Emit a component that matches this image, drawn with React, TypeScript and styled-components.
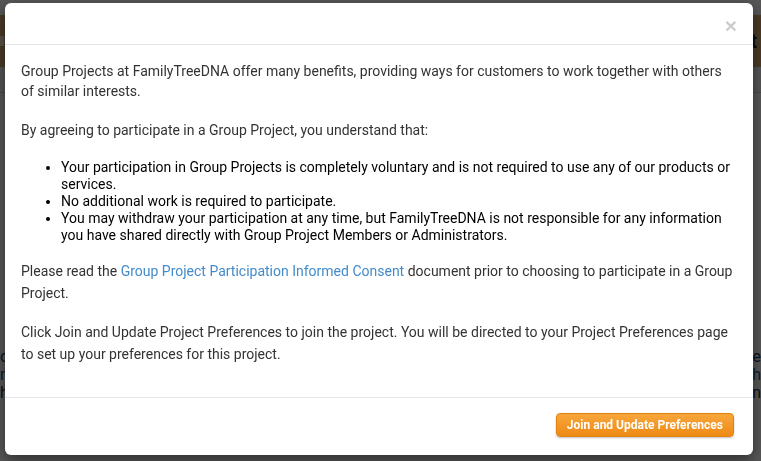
import React from "react";
import styled, { createGlobalStyle } from "styled-components";

const GlobalStyle = createGlobalStyle`
  html, body {
    margin: 0;
    padding: 0;
    width: 761px;
    height: 461px;
    overflow: hidden;
    background: #fafafa;
    font-family: Roboto, "Liberation Sans", Arial, sans-serif;
  }
  * {
    box-sizing: border-box;
  }
`;

// Page behind the modal
const Page = styled.div`
  width: 761px;
  height: 461px;
  display: flex;
  flex-direction: column;
  background: #fafafa;
`;
const TopGap = styled.div`
  height: 15px;
  background: #f8f8f8;
`;
const Banner = styled.header`
  height: 52px;
  background: #d6aa6e;
  display: flex;
  align-items: center;
  justify-content: space-between;
  padding: 0 4px 0 0;
  font-size: 20px;
  font-weight: 700;
  color: #222;
`;
const BannerTab = styled.span`
  display: block;
  width: 4px;
  height: 10px;
  background: #fff2d8;
`;
const SubBar = styled.div`
  height: 26px;
  border-bottom: 1px solid #cfcfcf;
  background: #f4f4f4;
`;
const PageBody = styled.main`
  flex: 1;
  display: flex;
  flex-direction: column;
  justify-content: flex-end;
  padding: 0 0 59px;
  font-size: 16px;
  line-height: 18px;
`;
const PageLine = styled.div<{ $color: string }>`
  display: flex;
  justify-content: space-between;
  color: ${({ $color }) => $color};
`;

// Modal
const Backdrop = styled.div`
  position: fixed;
  inset: 0;
  background: rgba(0, 0, 0, 0.65);
`;
const ModalLayer = styled.div`
  position: fixed;
  inset: 0;
  padding: 3px 0 0 5px;
`;
const Dialog = styled.section`
  width: 748px;
  height: 452px;
  background: #fff;
  border-radius: 6px;
  box-shadow: 0 5px 15px rgba(0, 0, 0, 0.5);
  display: flex;
  flex-direction: column;
  overflow: hidden;
`;
const Header = styled.div`
  height: 42px;
  border-bottom: 1px solid #e5e5e5;
  display: flex;
  justify-content: flex-end;
  align-items: center;
  padding: 4px 16px 0;
`;
const Close = styled.button`
  border: 0;
  background: none;
  padding: 0;
  font-family: "Liberation Sans", Arial, sans-serif;
  font-size: 21px;
  font-weight: 700;
  line-height: 1;
  color: #000;
  opacity: 0.2;
  cursor: pointer;
`;
const Body = styled.div`
  flex: 1;
  padding: 16px 16px 0;
  font-size: 14px;
  line-height: 20px;
  color: #333;
`;
const Paragraph = styled.p<{ $lh?: number; $mb?: number }>`
  margin: 0 0 ${({ $mb }) => $mb ?? 18}px;
  line-height: ${({ $lh }) => $lh ?? 20}px;
`;
const List = styled.ul`
  margin: 0 0 16px;
  padding-left: 40px;
  color: #000;
  line-height: 17px;
`;
const ConsentLink = styled.a`
  color: #428bca;
  text-decoration: none;
`;
const Footer = styled.div`
  border-top: 1px solid #e5e5e5;
  display: flex;
  justify-content: flex-end;
  padding: 15px 19px 18px;
`;
const JoinButton = styled.button`
  height: 24px;
  padding: 0 10px;
  border: 1px solid #e0820f;
  border-radius: 4px;
  background: linear-gradient(to bottom, #f8a63c 0%, #ee8a14 100%);
  box-shadow: 0 1px 2px rgba(0, 0, 0, 0.25);
  color: #fff;
  font-family: Roboto, "Liberation Sans", Arial, sans-serif;
  font-size: 12px;
  font-weight: 700;
  cursor: pointer;
`;

const App = () => {
  return (
    <>
      <GlobalStyle />
      <Page>
        <TopGap />
        <Banner>
          <BannerTab />
          <span>st</span>
        </Banner>
        <SubBar />
        <PageBody>
          <PageLine $color="#1a3c6e">
            <span>o</span>
            <span>de</span>
          </PageLine>
          <PageLine $color="#1a5a8a">
            <span>n</span>
            <span>h</span>
          </PageLine>
          <PageLine $color="#333">
            <span>h</span>
            <span>n</span>
          </PageLine>
        </PageBody>
      </Page>
      <Backdrop />
      <ModalLayer>
        <Dialog>
          <Header>
            <Close aria-label="Close">×</Close>
          </Header>
          <Body>
            <Paragraph $mb={19}>
              Group Projects at FamilyTreeDNA offer many benefits, providing
              ways for customers to work together with others of similar
              interests.
            </Paragraph>
            <Paragraph $mb={19}>
              By agreeing to participate in a Group Project, you understand
              that:
            </Paragraph>
            <List>
              <li>
                Your participation in Group Projects is completely voluntary
                and is not required to use any of our products or services.
              </li>
              <li>No additional work is required to participate.</li>
              <li>
                You may withdraw your participation at any time, but
                FamilyTreeDNA is not responsible for any information you have
                shared directly with Group Project Members or Administrators.
              </li>
            </List>
            <Paragraph $lh={22} $mb={17}>
              Please read the{" "}
              <ConsentLink href="#">
                Group Project Participation Informed Consent
              </ConsentLink>{" "}
              document prior to choosing to participate in a Group Project.
            </Paragraph>
            <Paragraph $lh={22}>
              Click Join and Update Project Preferences to join the project.
              You will be directed to your Project Preferences page to set up
              your preferences for this project.
            </Paragraph>
          </Body>
          <Footer>
            <JoinButton>Join and Update Preferences</JoinButton>
          </Footer>
        </Dialog>
      </ModalLayer>
    </>
  );
};

export default App;
